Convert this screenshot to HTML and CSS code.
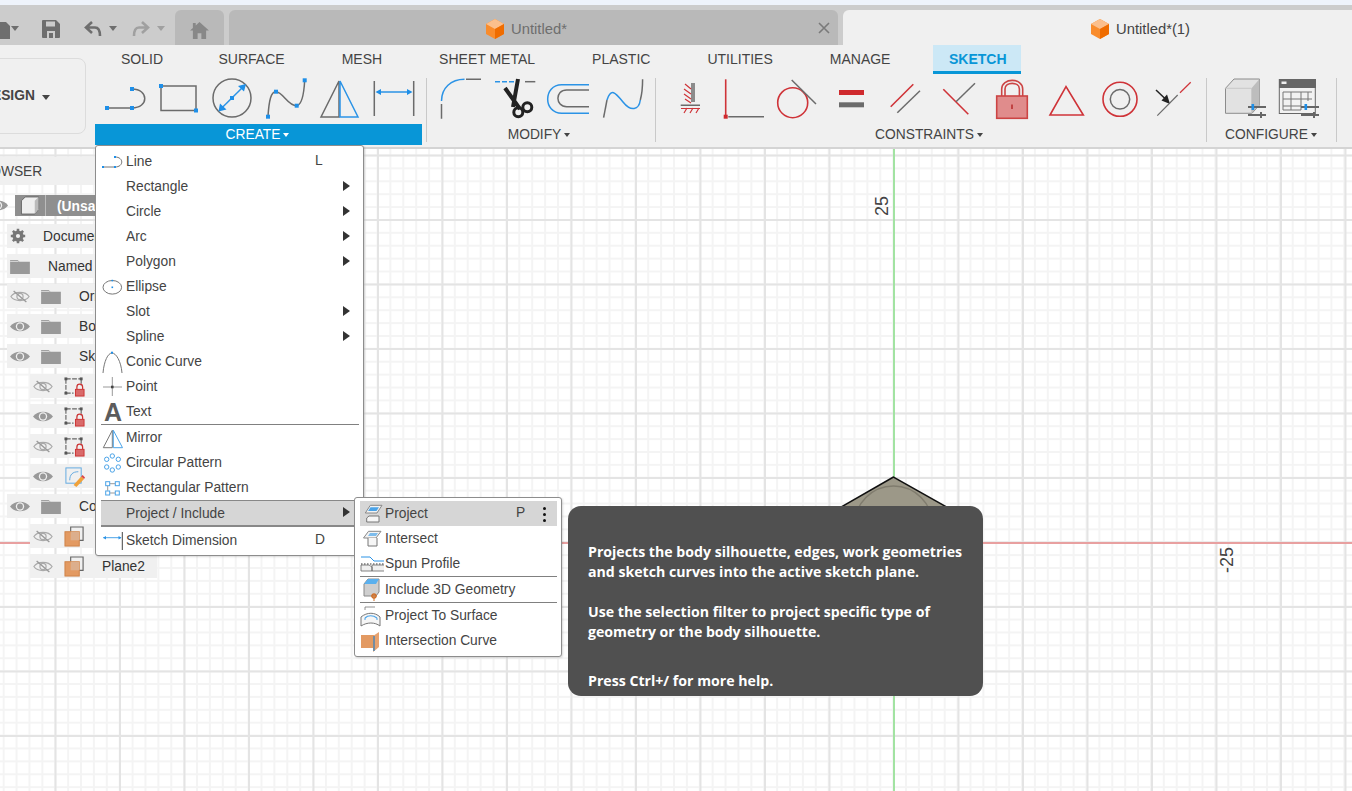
FILE: index.html
```html
<!DOCTYPE html>
<html lang="en">
<head>
<meta charset="utf-8">
<title>Untitled*(1)</title>
<link rel="stylesheet" href="styles.css">
</head>
<body>
<svg class="sprite" aria-hidden="true">
  <defs>
    <symbol id="eye" viewBox="0 0 22 14"><path d="M0 7C5 0 17 0 22 7C17 14 5 14 0 7Z" fill="#999"/><circle cx="11" cy="7" r="4.6" fill="#f0f0f0"/><circle cx="11" cy="7" r="3.2" fill="#999"/></symbol>
    <symbol id="eyeoff" viewBox="0 0 22 14"><path d="M1 7C5 1 17 1 21 7C17 13 5 13 1 7Z" fill="none" stroke="#aaa" stroke-width="1.3"/><circle cx="11" cy="7" r="3.4" fill="none" stroke="#aaa" stroke-width="1.3"/><path d="M4 1L18 13" stroke="#999" stroke-width="1.5"/></symbol>
    <symbol id="folder" viewBox="0 0 21 17"><path d="M0 2H8L10 4H21V17H0Z" fill="#999"/><path d="M0 3.6H9" stroke="#f0f0f0" stroke-width="0.8"/></symbol>
    <symbol id="sk" viewBox="0 0 22 22"><path d="M2 3H18M2 3V18M2 18H10M18 3V10" fill="none" stroke="#666" stroke-width="1.2" stroke-dasharray="5 1.5"/><rect x="0.5" y="1.5" width="3" height="3" fill="#555"/><rect x="16.5" y="1.5" width="3" height="3" fill="#555"/><rect x="0.5" y="16.5" width="3" height="3" fill="#555"/><path d="M13.5 14V11.5a3 3 0 0 1 6 0V14" fill="none" stroke="#c33" stroke-width="1.3"/><rect x="12" y="14" width="9" height="7" fill="#d96a6a" stroke="#c33"/></symbol>
    <symbol id="pl" viewBox="0 0 22 22"><path d="M7 6V1H20V15H15" fill="none" stroke="#666" stroke-width="1.2"/><rect x="1" y="6" width="15" height="15" fill="#e39a62" stroke="#cf8247"/><rect x="7" y="6" width="9" height="9" fill="#dcae8c"/></symbol>
    <symbol id="sliders" viewBox="0 0 18 14"><path d="M0 3H18M0 11H18" stroke="#666" stroke-width="2"/><path d="M13 8V14" stroke="#666" stroke-width="2"/><rect x="3.5" y="0" width="2.6" height="6" fill="#1e8fe8"/></symbol>
  </defs>
</svg>

<header class="titlebar">
  <div class="quick">
    <svg class="qa qa-doc" viewBox="0 0 10 20"><path d="M-4 3H6L10 7V20H-4Z" fill="#6e6e6e"/></svg>
    <span class="caret qa-c1"></span>
    <svg class="qa qa-save" viewBox="0 0 18 18"><path d="M1 0H14L18 4V17Q18 18 17 18H1Q0 18 0 17V1Q0 0 1 0Z" fill="#6e6e6e"/><rect x="4" y="1.5" width="9" height="5" fill="#ccc"/><rect x="5" y="11" width="8" height="7" fill="#ccc"/><rect x="7" y="13" width="4" height="5" fill="#6e6e6e"/></svg>
    <svg class="qa qa-undo" viewBox="0 0 18 16"><path d="M8 1L2 6.5L8 12M2 6.5H11Q16 6.5 16 15" fill="none" stroke="#6e6e6e" stroke-width="2.6"/></svg>
    <span class="caret qa-c2"></span>
    <svg class="qa qa-redo" viewBox="0 0 18 16"><path d="M10 1L16 6.5L10 12M16 6.5H7Q2 6.5 2 15" fill="none" stroke="#a0a0a0" stroke-width="2.6"/></svg>
    <span class="caret light qa-c3"></span>
  </div>
  <div class="tab tab-home">
    <svg class="home" viewBox="0 0 20 18"><path d="M10 0L20 9H17V18H12V12H8V18H3V9H0L3 6.3V1H6V3.6Z" fill="#888"/></svg>
  </div>
  <div class="tab tab-doc">
    <svg class="cube" viewBox="0 0 18 20"><path d="M9 0L18 5V15L9 20L0 15V5Z" fill="#f98c2c"/><path d="M9 0L18 5L9 10L0 5Z" fill="#fbbf8c"/><path d="M9 10L18 5V15L9 20Z" fill="#ef6c00"/></svg>
    <span>Untitled*</span>
    <svg class="close" viewBox="0 0 12 12"><path d="M1 1L11 11M11 1L1 11" stroke="#7a7a7a" stroke-width="1.6"/></svg>
  </div>
  <div class="tab tab-active">
    <svg class="cube" viewBox="0 0 18 20"><path d="M9 0L18 5V15L9 20L0 15V5Z" fill="#f98c2c"/><path d="M9 0L18 5L9 10L0 5Z" fill="#fbbf8c"/><path d="M9 10L18 5V15L9 20Z" fill="#ef6c00"/></svg>
    <span>Untitled*(1)</span>
  </div>
</header>

<section class="toolbar">
  <div class="design"><span>DESIGN</span><i class="caret dark"></i></div>
  <div class="tools">
    <nav class="tabs">
      <span>SOLID</span><span>SURFACE</span><span>MESH</span><span>SHEET METAL</span><span>PLASTIC</span><span>UTILITIES</span><span>MANAGE</span><span class="on">SKETCH</span>
    </nav>
    <div class="ribbon">
      <div class="group g-create">
        <div class="icons">
          <svg viewBox="0 0 44 44"><path class="g" d="M4 32H29"/><path class="g" d="M29 13C46 13 46 32 29 32"/><rect class="bf" x="2" y="30" width="4" height="4"/><rect class="bf" x="27" y="30" width="4" height="4"/><rect class="bf" x="27" y="11" width="4" height="4"/></svg>
          <svg viewBox="0 0 44 44"><rect class="g" x="4" y="10" width="35" height="24.5"/><rect class="bf" x="2" y="8" width="4" height="4"/><rect class="bf" x="37" y="32.5" width="4" height="4"/></svg>
          <svg viewBox="0 0 44 44"><circle class="g" cx="21" cy="22" r="19"/><path class="b" d="M10 32.7L32 11"/><path class="bf" d="M7.500 35.500L9 27.500L15.500 33.500ZM35 8L33 15.500L27 10Z"/><rect class="bf" x="19" y="20" width="4" height="4"/></svg>
          <svg viewBox="0 0 44 44"><path class="g" d="M3 40C4 25 6 15 11 15.700C18 16 23 30 31.700 29.700C37 29 39 17 39.700 4.300"/><rect class="bf" x="1" y="38.700" width="4" height="4"/><rect class="bf" x="9" y="13.700" width="4" height="4"/><rect class="bf" x="29.700" y="27.700" width="4" height="4"/><rect class="bf" x="37.700" y="2.300" width="4" height="4"/></svg>
          <svg viewBox="0 0 44 44"><path class="g" d="M20 5L2 41H20Z"/><path class="b" d="M21 5L39 41H21Z"/></svg>
          <svg viewBox="0 0 44 44"><path class="g" d="M1.300 5V40M40.700 5V40"/><path class="b" d="M4 16H38"/><path class="bf" d="M2.500 16L8 13V19ZM39.500 16L34 13V19Z"/></svg>
        </div>
        <div class="label">CREATE<i class="caret white"></i></div>
      </div>
      <div class="sep"></div>
      <div class="group g-modify">
        <div class="icons">
          <svg viewBox="0 0 44 44"><path class="b" d="M2.500 25C2.500 12 12 3.300 25.500 3.300"/><path class="g" d="M2.500 28V42.700M27 3.300H42"/></svg>
          <svg viewBox="0 0 44 44"><path class="b" d="M2 5.700H22" stroke-dasharray="5 2"/><path class="g" d="M32 5.700H42.300"/><path d="M12 12L27 33M25 3L20 31" fill="none" stroke="#222" stroke-width="4"/><circle cx="25.300" cy="36.300" r="4.500" fill="none" stroke="#222" stroke-width="3"/><circle cx="34.300" cy="31.300" r="4.500" fill="none" stroke="#222" stroke-width="3"/></svg>
          <svg viewBox="0 0 44 44"><path class="b" d="M42 8.700H14.700C-4 8.700 -4 37.300 14.700 37.300H42"/><path class="g" d="M42 14H19.700C8 14 8 30.700 19.700 30.700H42"/></svg>
          <svg viewBox="0 0 44 44"><path class="g" d="M2.600 41.700L6 24"/><path class="b" d="M6 24C10 12 14 16 22 26C30 36 38 34 39.300 24"/><path class="g" d="M39.300 24C41 18 41.600 10 41.600 3.300"/></svg>
        </div>
        <div class="label">MODIFY<i class="caret dark"></i></div>
      </div>
      <div class="sep"></div>
      <div class="group g-constraints">
        <div class="icons">
          <svg viewBox="0 0 44 44"><path class="g" d="M25 7V26M27 7V26M13.700 29.300H33"/><path class="r thin" d="M18 8L24 13M17 13L24 18M17 18L24 23M18 23L24 27M17 37L20 32M23 37L26 32M29 37L32 32M14 32.500H33"/></svg>
          <svg viewBox="0 0 44 44"><path class="r" d="M4.700 3.300V39"/><rect class="rf" x="2.700" y="38.700" width="4" height="4"/><path class="g" d="M7.300 40.700H43"/></svg>
          <svg viewBox="0 0 44 44"><circle class="r" cx="17.700" cy="26.700" r="15"/><path class="g" d="M16.700 4L41 28"/></svg>
          <svg viewBox="0 0 44 44"><rect class="rf" x="10" y="14" width="25" height="5"/><rect class="gf" x="10" y="26.300" width="25" height="5"/></svg>
          <svg viewBox="0 0 44 44"><path class="r" d="M7.700 30.700L30.300 8.300"/><path class="g" d="M14.300 36.700L37 14.700"/></svg>
          <svg viewBox="0 0 44 44"><path class="r" d="M6.300 13.300L31.300 38.300"/><path class="g" d="M19 25.700L38 7.300"/></svg>
          <svg viewBox="0 0 44 44"><path d="M10.700 20V13C10.700 1.500 31.700 1.500 31.700 13V20M14 20V13C14 5.500 28.400 5.500 28.400 13V20" fill="none" stroke="#cc4444" stroke-width="1.600"/><rect x="5.700" y="20" width="30.600" height="22.300" fill="#e08c8c" stroke="#cc4444" stroke-width="1.600"/><path d="M21 28.500V33" stroke="#b93030" stroke-width="1.600"/></svg>
          <svg viewBox="0 0 44 44"><path class="r" d="M21 10.700L5 39H38.300Z"/></svg>
          <svg viewBox="0 0 44 44"><circle class="r" cx="21" cy="23.300" r="17"/><circle class="g" cx="21" cy="23.300" r="9.700"/></svg>
          <svg viewBox="0 0 44 44"><path d="M3 14L13 23.500" stroke="#222" stroke-width="1.500"/><path d="M17 28L8.500 24.500L14 18.500Z" fill="#222"/><path class="g thin" d="M4.300 39.700L24.700 19"/><path class="r thin" d="M27 16.700L37.700 6.300"/></svg>
        </div>
        <div class="label">CONSTRAINTS<i class="caret dark"></i></div>
      </div>
      <div class="sep"></div>
      <div class="group g-configure">
        <div class="icons">
          <svg viewBox="0 0 44 44"><path d="M2.500 12.300L11 3H36.500V29L29 37.300H2.500Z" fill="#e2e2e2" stroke="#8c8c8c"/><path d="M28.500 12.300L36.500 3V29L28.500 37.300Z" fill="#bdbdbd"/><path d="M2.500 12.300H28.500V37.300" fill="none" stroke="#c9c9c9"/><use href="#sliders" x="25" y="28" width="18" height="14"/></svg>
          <svg viewBox="0 0 44 44"><rect x="2.300" y="3.500" width="36" height="34" fill="#f2f2f2" stroke="#666"/><rect x="2" y="3" width="37" height="9" fill="#666"/><rect x="4.500" y="5.500" width="5" height="2.500" fill="#eee"/><path d="M6 16H35M6 23H35M6 30H24M6 16V34H24M14 16V34M24 16V34M31 16V25" fill="none" stroke="#777" stroke-width="1"/><use href="#sliders" x="24" y="28" width="18" height="14"/></svg>
        </div>
        <div class="label">CONFIGURE<i class="caret dark"></i></div>
      </div>
      <div class="sep"></div>
    </div>
  </div>
</section>

<main class="canvas">
  <div class="axis-x"></div>
  <div class="axis-y"></div>
  <svg class="profile" viewBox="0 0 130 60"><path d="M64.500 1L0 38V60H130V38Z" fill="#9c9888" stroke="#111" stroke-width="1.500"/><circle cx="64.500" cy="49" r="39" fill="none" stroke="#807c6e" stroke-width="1.500"/></svg>
  <span class="tick tick-25">25</span>
  <span class="tick tick-m25">-25</span>
</main>

<aside class="browser">
  <div class="b-head"><span>BROWSER</span></div>
  <div class="row root"><svg class="ic-eye eye-root"><use href="#eye"/></svg><span class="root-cube"><svg viewBox="0 0 20 20"><path d="M1 5L5 1H19V14L15 19H1Z" fill="#efefef" stroke="#666"/><path d="M15 5L19 1V14L15 19Z" fill="#bbb"/></svg></span><span class="root-name">(Unsaved)</span></div>
  <div class="row r0"><svg class="ic-gear" viewBox="0 0 20 20"><circle cx="10" cy="10" r="5.200" fill="none" stroke="#777" stroke-width="3.600"/><path d="M10 1V19M1 10H19M3.600 3.600L16.400 16.400M16.400 3.600L3.600 16.400" stroke="#777" stroke-width="3.200"/><circle cx="10" cy="10" r="2.600" fill="#f0f0f0"/></svg><span class="t-doc">Document Settings</span></div>
  <div class="row r0"><svg class="ic-folder"><use href="#folder"/></svg><span class="t-named">Named Views</span></div>
  <div class="row r0"><svg class="ic-eye"><use href="#eyeoff"/></svg><svg class="ic-folder f2"><use href="#folder"/></svg><span class="t-f">Origin</span></div>
  <div class="row r0"><svg class="ic-eye"><use href="#eye"/></svg><svg class="ic-folder f2"><use href="#folder"/></svg><span class="t-f">Bodies</span></div>
  <div class="row r0"><svg class="ic-eye"><use href="#eye"/></svg><svg class="ic-folder f2"><use href="#folder"/></svg><span class="t-f">Sketches</span></div>
  <div class="row r1"><svg class="ic-eye"><use href="#eyeoff"/></svg><svg class="ic-sk"><use href="#sk"/></svg><span class="t-s">Sketch1</span></div>
  <div class="row r1"><svg class="ic-eye"><use href="#eye"/></svg><svg class="ic-sk"><use href="#sk"/></svg><span class="t-s">Sketch2</span></div>
  <div class="row r1"><svg class="ic-eye"><use href="#eyeoff"/></svg><svg class="ic-sk"><use href="#sk"/></svg><span class="t-s">Sketch3</span></div>
  <div class="row r1"><svg class="ic-eye"><use href="#eye"/></svg><svg class="ic-sk" viewBox="0 0 22 22"><rect x="2" y="2" width="16" height="16" fill="none" stroke="#5fa8e0" stroke-width="1"/><path d="M6 15C6 9 9 6 15 6" fill="none" stroke="#5fa8e0"/><path d="M10 20L18 11L21 13.500L13 22Z" fill="#f0a23a"/><path d="M18 11L21 13.500L22 12L19.500 9.500Z" fill="#d44"/></svg><span class="t-s">Sketch4</span></div>
  <div class="row r0"><svg class="ic-eye"><use href="#eye"/></svg><svg class="ic-folder f2"><use href="#folder"/></svg><span class="t-f">Construction</span></div>
  <div class="row r1"><svg class="ic-eye"><use href="#eyeoff"/></svg><svg class="ic-sk"><use href="#pl"/></svg><span class="t-s">Plane1</span></div>
  <div class="row r1 last"><svg class="ic-eye"><use href="#eyeoff"/></svg><svg class="ic-sk"><use href="#pl"/></svg><span class="t-s">Plane2</span></div>
</aside>

<div class="menu">
  <div class="mi"><svg class="mic" viewBox="0 0 22 22"><path class="gl" d="M1 16H14"/><path class="gl" d="M13 6C22 6 22 16 13 16"/><rect class="bf" x="0" y="15" width="2" height="2"/><rect class="bf" x="12" y="15" width="2" height="2"/><rect class="bf" x="12" y="5" width="2" height="2"/></svg><span class="mt">Line</span><span class="key">L</span></div>
  <div class="mi"><span class="mic"></span><span class="mt">Rectangle</span><i class="arr"></i></div>
  <div class="mi"><span class="mic"></span><span class="mt">Circle</span><i class="arr"></i></div>
  <div class="mi"><span class="mic"></span><span class="mt">Arc</span><i class="arr"></i></div>
  <div class="mi"><span class="mic"></span><span class="mt">Polygon</span><i class="arr"></i></div>
  <div class="mi"><svg class="mic" viewBox="0 0 22 22"><ellipse class="gl" cx="10.300" cy="11.300" rx="9.300" ry="6.800"/><rect class="bf" x="9.500" y="10.500" width="1.600" height="1.600"/><rect class="bf" x="9.500" y="3.800" width="1.600" height="1.600"/></svg><span class="mt">Ellipse</span></div>
  <div class="mi"><span class="mic"></span><span class="mt">Slot</span><i class="arr"></i></div>
  <div class="mi"><span class="mic"></span><span class="mt">Spline</span><i class="arr"></i></div>
  <div class="mi"><svg class="mic" viewBox="0 0 22 22"><path class="gl" d="M1 22C2 10 6 2 10 2C14 2 19 10 20 22"/><rect class="bf" x="9" y="0.700" width="2" height="2"/></svg><span class="mt">Conic Curve</span></div>
  <div class="mi"><svg class="mic" viewBox="0 0 22 22"><path class="gl light" d="M1 11H20M10.300 1V20"/><rect x="9" y="9.700" width="2.600" height="2.600" fill="#444"/></svg><span class="mt">Point</span></div>
  <div class="mi"><span class="mic a-icon">A</span><span class="mt">Text</span></div>
  <div class="msep"></div>
  <div class="mi"><svg class="mic" viewBox="0 0 22 22"><path class="gl" d="M10.300 3.300L1.300 20.700H10.300Z"/><path class="bl" d="M11.300 3.300L20.500 20.700H11.300Z"/></svg><span class="mt">Mirror</span></div>
  <div class="mi"><svg class="mic" viewBox="0 0 22 22"><g class="bl"><circle cx="4.700" cy="7.300" r="2.200"/><circle cx="10.300" cy="4" r="2.200"/><circle cx="16.300" cy="7.300" r="2.200"/><circle cx="4.700" cy="15" r="2.200"/><circle cx="10.300" cy="18" r="2.200"/><circle cx="16.300" cy="15" r="2.200"/></g></svg><span class="mt">Circular Pattern</span></div>
  <div class="mi"><svg class="mic" viewBox="0 0 22 22"><path class="gl light" d="M8 6.700H13M8 16H13M5.700 9V13.700"/><g class="bl"><rect x="3.700" y="4.700" width="4" height="4"/><rect x="13.300" y="4.700" width="4" height="4"/><rect x="3.700" y="14" width="4" height="4"/><rect x="13.300" y="14" width="4" height="4"/></g></svg><span class="mt">Rectangular Pattern</span></div>
  <div class="mi hover"><span class="mic"></span><span class="mt">Project / Include</span><i class="arr"></i></div>
  <div class="mi"><svg class="mic" viewBox="0 0 22 22"><path class="bl" d="M1.300 7.700H19"/><path d="M1 7.700L4 6V9.500ZM19.500 7.700L16.500 6V9.500Z" fill="#2b93e6"/><path class="gl dk" d="M20.300 2V20"/></svg><span class="mt">Sketch Dimension</span><span class="key">D</span></div>
</div>

<div class="submenu">
  <div class="si hover"><svg class="sic" viewBox="0 0 22 22"><path d="M5.300 10L10.300 2.300H22L17 10Z" fill="#f3f3f3" stroke="#888"/><path d="M8 8L10.500 4.300H19L16.500 8Z" fill="#4aa3e8"/><path d="M6.700 15L9 13H19V19H6.700Z" fill="#f6f6f6" stroke="#777"/></svg><span class="mt">Project</span><span class="key skey">P</span><span class="dots"><i></i><i></i><i></i></span></div>
  <div class="si"><svg class="sic" viewBox="0 0 22 22"><path d="M3.500 10L8.500 3.300H21L16 10Z" fill="#f3f3f3" stroke="#888"/><path d="M8 8L10 5H18L16 8Z" fill="#7dbcec"/><path d="M8 10V18H17V10" fill="#f6f6f6" stroke="#777"/></svg><span class="mt">Intersect</span></div>
  <div class="si"><svg class="sic" viewBox="0 0 22 22"><path d="M1 4H10L14 8H24" fill="none" stroke="#2b93e6"/><path d="M1 11H24" stroke="#333" stroke-dasharray="1.500 1.500"/><path d="M1 12H9L12 14V18H1ZM24 12H12V18H24" fill="#f0f0f0" stroke="#666" stroke-width="0.800"/></svg><span class="mt">Spun Profile</span></div>
  <div class="ssep"></div>
  <div class="si"><svg class="sic" viewBox="0 0 22 22"><path d="M4 5L8 0H19V13L16 17H4Z" fill="#cfcfcf" stroke="#888"/><path d="M4 5L8 0H19L16 5Z" fill="#5ab0ee"/><circle cx="14" cy="17" r="2" fill="none" stroke="#d0702a" stroke-width="1.300"/><path d="M14 15V22M11 17H17" stroke="#d0702a"/></svg><span class="mt">Include 3D Geometry</span></div>
  <div class="ssep"></div>
  <div class="si"><svg class="sic" viewBox="0 0 22 22"><path d="M5 2V5M5 2H15" fill="none" stroke="#777" stroke-width="0.800"/><path d="M1 21V12C7 7 15 7 20 12V21C15 17 7 17 1 21Z" fill="#f6f6f6" stroke="#777"/><path d="M5 13C8 10 13 10 17 13" fill="none" stroke="#4aa3e8" stroke-width="1.200"/><path d="M5 13V15M17 13V15" stroke="#4aa3e8"/></svg><span class="mt">Project To Surface</span></div>
  <div class="si"><svg class="sic" viewBox="0 0 22 22"><rect x="1" y="5" width="13" height="13" fill="#e39a62"/><path d="M13 6L19 2V17L13 22Z" fill="#e8a26f"/><path d="M14 6V21" stroke="#2b7fc2" stroke-width="1.200"/></svg><span class="mt">Intersection Curve</span></div>
</div>

<div class="tooltip">
  <p class="tp1">Projects the body silhouette, edges, work geometries<br>and sketch curves into the active sketch plane.</p>
  <p class="tp2">Use the selection filter to project specific type of<br>geometry or the body silhouette.</p>
  <p class="tp3">Press Ctrl+/ for more help.</p>
</div>
</body>
</html>
```

FILE: styles.css
```css
* { box-sizing: border-box; }
html, body { margin: 0; padding: 0; height: 791px; overflow: hidden; }
body {
  position: relative;
  width: 1352px;
  display: flex;
  flex-direction: column;
  font: 13.800px/20px "Liberation Sans", Arial, sans-serif;
  color: #444;
  background: #fff;
  border-top: 5px solid #eef3fb;
}
.sprite { position: absolute; width: 0; height: 0; }

/* title bar */
.titlebar {
  display: flex;
  height: 40px;
  padding-top: 5px;
  background: #ccc;
  flex: none;
}
.quick { width: 175px; flex: none; display: flex; align-items: center; padding-top: 2px; }
.qa { flex: none; }
.qa-doc { width: 10px; height: 20px; }
.qa-c1 { margin-left: 1px; }
.qa-save { width: 18px; height: 18px; margin-left: 23px; }
.qa-undo { width: 18px; height: 16px; margin-left: 24px; }
.qa-c2 { margin-left: 7px; }
.qa-redo { width: 18px; height: 16px; margin-left: 15px; }
.qa-c3 { margin-left: 7px; }
.caret {
  display: inline-block;
  width: 0; height: 0;
  border-left: 4.500px solid transparent;
  border-right: 4.500px solid transparent;
  border-top: 5px solid #6e6e6e;
}
.caret.light { border-top-color: #a0a0a0; }
.caret.dark { border-top-color: #444; border-left-width: 3.500px; border-right-width: 3.500px; border-top-width: 4px; margin-left: 3px; vertical-align: 2px; }
.caret.white { border-top-color: #fff; border-left-width: 3.500px; border-right-width: 3.500px; border-top-width: 4px; margin-left: 3px; vertical-align: 2px; }
.tab {
  display: flex;
  align-items: center;
  border-radius: 6px 6px 0 0;
  background: #b9b9b9;
  flex: none;
  font-size: 14.800px;
  padding-top: 2px;
}
.tab-home { width: 49px; margin-right: 5px; justify-content: center; }
.home { width: 19px; height: 17px; margin-top: 3px; }
.tab-doc { width: 609px; margin-right: 5px; padding-left: 257px; color: #6e6e6e; position: relative; }
.tab-active { width: 509px; padding-left: 248px; background: #f0f0f0; color: #444; border-radius: 6px 0 0 0; }
.cube { width: 18px; height: 20px; margin-right: 7px; margin-top: 0; }
.close { width: 12px; height: 12px; position: absolute; left: 589px; top: 12px; }

/* toolbar */
.toolbar {
  display: flex;
  height: 104px;
  background: #f0f0f0;
  border-bottom: 2px solid #d4d4d4;
  flex: none;
}
.design {
  width: 116px;
  height: 76px;
  margin: 13px 10px 0 -30px;
  flex: none;
  border: 1px solid #dcdcdc;
  border-radius: 8px;
  display: flex;
  align-items: center;
  padding-left: 11px;
  font-weight: bold;
  color: #444;
}
.design .caret { margin-left: 7px; border-left-width: 4px; border-right-width: 4px; border-top-width: 5px; margin-top: 2px; }
.tools { flex: 1; min-width: 0; }
.tabs { display: flex; gap: 57px; height: 29px; padding-left: 25px; align-items: flex-start; line-height: 29px; font-size: 14px; }
.tabs span:first-child { margin-right: -1.500px; }
.tabs .on {
  margin: 0 -16px 0 -14.500px;
  padding: 0 16px;
  width: 88px;
  text-align: center;
  height: 29px;
  background: #cce8f6;
  border-bottom: 3px solid #0896d7;
  color: #0896d7;
  font-weight: bold;
}
.ribbon { display: flex; align-items: flex-start; }
.group { flex: none; }
.icons { display: flex; height: 44px; margin-top: 2px; margin-bottom: 4px; }
.icons svg { width: 44px; height: 44px; margin: 0 5px; flex: none; overflow: visible; }
.label { height: 21px; line-height: 21px; text-align: center; }
.g-create { width: 326px; padding: 0 2px; }
.g-create .label { margin: 0 -2px 0 -3px; padding-right: 2px; background: #0896d7; color: #fff; }
.g-modify { width: 217px; margin-left: 7px; }
.g-modify .label { padding-right: 7px; }
.g-constraints { width: 540px; margin-left: 6px; }
.g-constraints .label { padding-right: 6px; }
.g-configure { width: 108px; margin-left: 11px; }
.g-configure .label { padding-right: 2px; }
.sep { width: 1px; height: 64px; margin: 4px 0 0 4px; background: #c9c9c9; flex: none; }
.g-configure + .sep { margin-left: 10px; }
.g { fill: none; stroke: #6b6b6b; stroke-width: 1.500; }
.b { fill: none; stroke: #2b93e6; stroke-width: 1.500; }
.r { fill: none; stroke: #cf3338; stroke-width: 1.600; }
.thin { stroke-width: 1.200; }
.bf { fill: #1e8fe8; }
.rf { fill: #cf2a2e; }
.gf { fill: #6b6b6b; }
.gl { fill: none; stroke: #777; stroke-width: 1; }
.gl.light { stroke: #999; }
.gl.dk { stroke: #444; }
.bl { fill: none; stroke: #4aa3e8; stroke-width: 1; }

/* canvas */
.canvas {
  position: relative;
  flex: 1;
  overflow: hidden;
  background-color: #fff;
  background-image:
    linear-gradient(90deg, #e4e4e4 2px, transparent 2px),
    linear-gradient(#e4e4e4 2px, transparent 2px),
    linear-gradient(90deg, #f4f4f4 2px, transparent 2px),
    linear-gradient(#f4f4f4 2px, transparent 2px);
  background-size: 64.500px 64.500px, 64.500px 64.500px, 12.900px 12.900px, 12.900px 12.900px;
  background-position: 54.500px 0, 0 5.500px, 2.700px 0, 0 5.500px;
}
.axis-x { position: absolute; left: 0; right: 0; top: 393px; height: 2px; background: #e8a0a0; }
.axis-y { position: absolute; left: 893px; top: 0; bottom: 0; width: 2px; background: #a2e3a2; }
.profile { position: absolute; left: 829px; top: 327px; width: 130px; height: 60px; }
.tick { position: absolute; font-size: 18px; line-height: 20px; color: #444; transform: rotate(-90deg); }
.tick-25 { left: 872px; top: 47px; }
.tick-m25 { left: 1214px; top: 401px; }

/* browser */
.browser { position: absolute; left: 0; top: 152px; width: 200px; overflow: hidden; }
.b-head { width: 95px; height: 28px; background: #f0f0f0; line-height: 30px; margin-bottom: 10px; white-space: nowrap; overflow: hidden; }
.b-head span { margin-left: -29px; display: block; }
.row { display: flex; align-items: center; height: 24px; margin-bottom: 6px; background: #f0f0f0; position: relative; white-space: nowrap; color: #333; }
.r0 { margin-left: 7px; padding-left: 3px; width: 193px; }
.r1 { margin-left: 30px; padding-left: 3px; width: 127px; }
.root { height: 21px; margin-bottom: 8px; width: 200px; background: none; }
.eye-root { margin-left: -12px; }
.ic-eye { width: 20px; height: 13px; flex: none; }
.root-cube { width: 31px; height: 21px; margin-left: 7px; background: #8f8f8f; flex: none; padding: 1px 5px; border-right: 1px solid #bbb; }
.root-cube svg { width: 20px; height: 19px; display: block; }
.root-name { flex: 1; height: 21px; background: #8f8f8f; color: #fff; font-weight: bold; padding-left: 11px; line-height: 23px; }
.ic-gear { width: 16px; height: 16px; margin-left: 0; flex: none; }
.t-doc, .t-named, .t-f, .t-s { padding-top: 2px; }
.t-doc { margin-left: 17px; }
.ic-folder { width: 20px; height: 16px; flex: none; }
.t-named { margin-left: 18px; }
.f2 { margin-left: 11px; }
.t-f { margin-left: 18px; }
.ic-sk { width: 21px; height: 21px; margin-left: 11px; flex: none; }
.t-s { margin-left: 17px; }

/* menus */
.menu {
  position: absolute;
  left: 95px;
  top: 140px;
  width: 269px;
  height: 411px;
  padding: 3px 4px 0 5px;
  background: #fff;
  border: 1px solid #8d8d8d;
  border-radius: 3px;
  box-shadow: 1px 1px 2px rgba(0,0,0,.15);
}
.mi, .si { position: relative; display: flex; align-items: center; height: 25px; white-space: nowrap; color: #444; }
.mic { width: 22px; height: 22px; margin: 0 2px 0 1px; flex: none; display: block; }
.a-icon { font-weight: bold; font-size: 25px; line-height: 22px; color: #5c5c5c; text-align: center; }
.key { position: absolute; left: 214px; top: 2px; }
.arr {
  position: absolute;
  left: 242px;
  top: 7px;
  width: 0; height: 0;
  border-top: 5.500px solid transparent;
  border-bottom: 5.500px solid transparent;
  border-left: 7px solid #333;
}
.msep { height: 1px; background: #808080; }
.mi.hover { height: 27px; padding-top: 2px; margin-bottom: 1px; background: #d6d6d6; border-top: 1px solid #888; border-bottom: 2px solid #888; }
.mi.hover .arr { top: 6px; }
.submenu {
  position: absolute;
  left: 354px;
  top: 492px;
  width: 208px;
  height: 160px;
  padding: 3px 4px 0 5px;
  background: #fff;
  border: 1px solid #8d8d8d;
  border-radius: 3px;
  box-shadow: 1px 1px 2px rgba(0,0,0,.15);
}
.si.hover { background: #d6d6d6; }
.sic { width: 22px; height: 22px; margin-right: 3px; flex: none; overflow: visible; }
.skey { left: 156px; }
.dots { position: absolute; left: 183px; top: 6px; display: flex; flex-direction: column; gap: 3px; }
.dots i { width: 3px; height: 3px; border-radius: 50%; background: #111; }
.ssep { height: 1px; background: #808080; }

/* tooltip */
.tooltip {
  position: absolute;
  left: 568px;
  top: 501px;
  width: 415px;
  height: 190px;
  padding: 36px 10px 0 20px;
  border-radius: 13px;
  background: #505050;
  color: #fff;
  font: 700 14.150px/20px "Open Sans", sans-serif;
}
.tooltip p { margin: 0; white-space: nowrap; }
.tp2 { margin-top: 20px !important; }
.tp3 { margin-top: 29px !important; }
```
